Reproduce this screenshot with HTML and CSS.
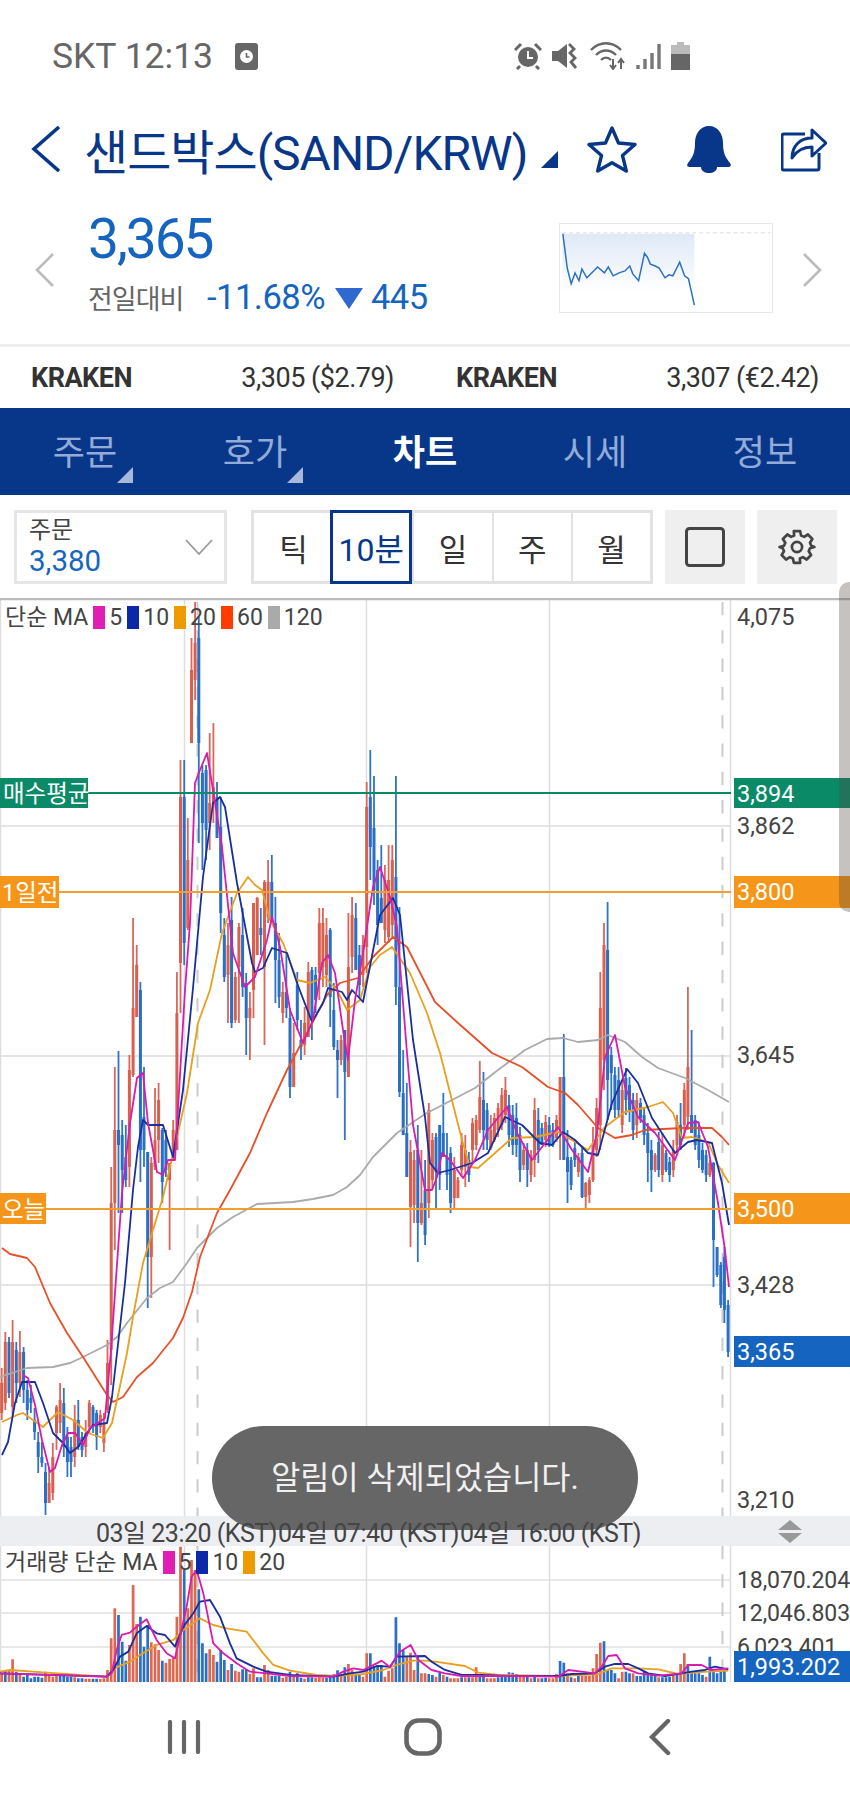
FILE: index.html
```html
<!DOCTYPE html>
<html lang="ko">

<head>
    <meta charset="UTF-8">
    <meta name="viewport" content="width=device-width, initial-scale=1.0">
    <title>샌드박스 차트</title>
    <link rel="stylesheet" href="styles.css">
</head>

<body>
    <div class="phone">

        <!-- Status bar -->
        <div class="status-bar">
            <span class="carrier">SKT 12:13</span>
            <svg class="clock-icon" width="23" height="27" viewBox="0 0 23 27">
                <rect width="23" height="27" rx="3" fill="#666" />
                <circle cx="11.5" cy="13.5" r="6.5" fill="#fff" />
                <path d="M11.5 10v4h3" fill="none" stroke="#666" stroke-width="1.6" />
            </svg>
            <div class="status-icons">
                <svg width="28" height="28" viewBox="0 0 28 28">
                    <circle cx="14" cy="15" r="10" fill="#666" />
                    <path d="M14 9v7h5" fill="none" stroke="#fff" stroke-width="2" />
                    <path d="M1 8l6-6M27 8l-6-6M6 24l-3 3M22 24l3 3" stroke="#666" stroke-width="3" />
                </svg>
                <svg width="28" height="28" viewBox="0 0 28 28">
                    <path d="M0 9h6l9-7v24l-9-7H0z" fill="#666" />
                    <path d="M17 2l5 5-4 4 5 5-4 4 5 6" fill="none" stroke="#666" stroke-width="2.800" />
                </svg>
                <svg width="36" height="28" viewBox="0 0 36 28">
                    <path d="M1 8c9-9 21-9 30 0M6 13c6-6 14-6 20 0M11 18c3-3 7-3 10 0" fill="none" stroke="#666" stroke-width="2.4" />
                    <path d="M23 17v9M20 23l3 4 3-4M31 27v-9M28 21l3-4 3 4" fill="none" stroke="#666" stroke-width="2" />
                </svg>
                <svg width="25" height="28" viewBox="0 0 25 28">
                    <path d="M2 27v-4M9 27v-10M16 27v-16M23 27V2" stroke="#777" stroke-width="3.4" />
                </svg>
                <svg class="battery" width="19" height="28" viewBox="0 0 19 28">
                    <path d="M6 0h7v3h6v9H0V3h6z" fill="#bbb" />
                    <path d="M0 12h19v16H0z" fill="#666" />
                </svg>
            </div>
        </div>

        <!-- Title -->
        <div class="title-bar">
            <svg class="back" width="30" height="46" viewBox="0 0 30 46">
                <path d="M28 1L3 23l25 22" fill="none" stroke="#08378a" stroke-width="3.6" />
            </svg>
            <h1 class="title">샌드박스(SAND/KRW)</h1>
            <svg class="title-corner" width="17" height="17" viewBox="0 0 17 17">
                <path d="M17 0v17H0z" fill="#08378a" />
            </svg>
            <div class="title-icons">
                <svg width="50" height="48" viewBox="0 0 50 48">
                    <path d="M25 3l6.500 15 16.500 1.500-12.500 11 3.800 15.500-14.300-8.300-14.300 8.300 3.800-15.500L2 19.500 18.500 18z" fill="none" stroke="#08378a" stroke-width="3.400" stroke-linejoin="round" />
                </svg>
                <svg width="46" height="48" viewBox="0 0 46 48">
                    <path d="M23 1c9 0 14 8 14 17 0 9 2 14 7 20 2 3 0 4-2 4H4c-2 0-4-1-2-4 5-6 7-11 7-20C9 9 14 1 23 1z" fill="#08378a" />
                    <path d="M15 42c0 4 4 6 8 6s8-2 8-6z" fill="#08378a" />
                </svg>
                <svg width="46" height="46" viewBox="0 0 46 46">
                    <path d="M24 8H3a2 2 0 0 0-2 2v32a2 2 0 0 0 2 2h33a2 2 0 0 0 2-2V27" fill="none" stroke="#08378a" stroke-width="3" />
                    <path d="M11 32c0-12 8-20 20-20V4l14 13-14 13v-9c-9 0-15 3-20 11z" fill="none" stroke="#08378a" stroke-width="3" stroke-linejoin="round" />
                </svg>
            </div>
        </div>

        <!-- Quote -->
        <div class="quote">
            <svg class="pager" width="19" height="34" viewBox="0 0 19 34">
                <path d="M18 1L2 17l16 16" fill="none" stroke="#bbb" stroke-width="2.600" />
            </svg>
            <div class="quote-text">
                <div class="price">3,365</div>
                <div class="change">
                    <span class="change-label">전일대비</span>
                    <span class="change-pct">-11.68%</span>
                    <svg width="28" height="21" viewBox="0 0 28 21">
                        <path d="M0 0h28L14 21z" fill="#2f68d0" />
                    </svg>
                    <span class="change-num">445</span>
                </div>
            </div>
            <svg class="spark" width="214" height="90" viewBox="558 222 214 90">
                <defs>
                    <linearGradient id="sparkFill" x1="0" y1="0" x2="0" y2="1">
                        <stop offset="0" stop-color="#dfe9f7" />
                        <stop offset="1" stop-color="#ffffff" />
                    </linearGradient>
                </defs>
                <path d="M559 232h135v60H559z" fill="url(#sparkFill)" />
                <path d="M559 231h213" stroke="#ddd" stroke-width="1" stroke-dasharray="4 3" />
                <polyline class="spark-line" points="559.500,232 564,267 568,283 572,272 576,280 579,268 584,277 590,271 595,266 602,272 606,266 611,275 617,272 623,270 628,265 631,273 637,280 643,252 646,256 649,263 654,265 658,267 664,277 668,274 672,275 679,261 684,275 688,278 694,305" />
            </svg>
            <svg class="pager" width="19" height="34" viewBox="0 0 19 34">
                <path d="M1 1l16 16L1 33" fill="none" stroke="#bbb" stroke-width="2.600" />
            </svg>
        </div>

        <!-- Overseas exchanges -->
        <div class="exchanges">
            <div class="exchange"><b>KRAKEN</b><span>3,305 ($2.79)</span></div>
            <div class="exchange"><b>KRAKEN</b><span>3,307 (€2.42)</span></div>
        </div>

        <!-- Tabs -->
        <div class="tabs">
            <div class="tab corner">주문</div>
            <div class="tab corner">호가</div>
            <div class="tab active">차트</div>
            <div class="tab">시세</div>
            <div class="tab">정보</div>
        </div>

        <!-- Toolbar -->
        <div class="toolbar">
            <div class="order-box">
                <div class="order-text">
                    <div class="order-label">주문</div>
                    <div class="order-price">3,380</div>
                </div>
                <svg width="28" height="16" viewBox="0 0 28 16">
                    <path d="M1 1l13 14L27 1" fill="none" stroke="#999" stroke-width="1.800" />
                </svg>
            </div>
            <div class="periods">
                <div class="period">틱</div>
                <div class="period selected">10분</div>
                <div class="period">일</div>
                <div class="period">주</div>
                <div class="period">월</div>
            </div>
            <div class="tool-btn">
                <svg width="40" height="40" viewBox="0 0 40 40">
                    <rect x="1.500" y="1.500" width="37" height="37" rx="3" fill="none" stroke="#444" stroke-width="3" />
                </svg>
            </div>
            <div class="tool-btn">
                <svg width="38" height="38" viewBox="0 0 24 24">
                    <path d="M10 2h4l.6 2.800 1.900.8 2.400-1.500 2.800 2.800-1.500 2.400.8 1.900L23 12v0l-2.800.8-.8 1.900 1.500 2.400-2.800 2.800-2.400-1.500-1.900.8L14 22h-4l-.6-2.800-1.900-.8-2.400 1.500-2.800-2.800 1.500-2.400-.8-1.900L1 12l2.800-.8.8-1.900-1.500-2.400 2.800-2.800 2.400 1.500 1.900-.8z" fill="none" stroke="#444" stroke-width="1.700" stroke-linejoin="round" />
                    <circle cx="12" cy="12" r="3.200" fill="none" stroke="#444" stroke-width="1.700" />
                </svg>
            </div>
        </div>

        <!-- Price chart -->
        <div class="chart">
            <svg class="plot" width="850" height="918" viewBox="0 598 850 918">
                <path class="grid" d="M0 826H731M0 1056H731M0 1285H731M.5 599V1516M184.500 599V1516M366.500 599V1516M549.500 599V1516M730.500 599V1516" />
                <path class="dash" d="M197.500 602V1516M722.500 602V1516" />
                <path d="M0 599H850" stroke="#bbb" stroke-width="2.500" />
                <g id="candles"></g>
                <polyline class="ma ma120" points="0,1377 27,1368 53,1367 70,1363 83,1357 107,1345 117,1337 127,1323 147,1298 160,1288 173,1282 187,1263 197,1248 217,1228 233,1217 257,1204 293,1202 313,1199 333,1195 347,1187 360,1175 373,1157 397,1133 425,1114 452,1100 475,1088 498,1070 525,1050 547,1039 563,1038 578,1042 598,1040 608,1035 625,1042 642,1057 658,1068 685,1078 708,1090 729,1102" />
                <polyline class="ma ma60" points="2,1248 10,1254 27,1258 35,1267 50,1303 67,1333 83,1357 107,1395 113,1402 123,1397 137,1377 153,1363 173,1338 183,1318 192,1292 200,1257 217,1213 230,1190 250,1153 267,1113 287,1070 307,1033 327,995 340,983 358,978 373,957 393,937 407,947 435,1002 458,1023 492,1053 522,1067 548,1087 565,1093 578,1105 598,1128 615,1138 632,1135 645,1130 682,1128 712,1128 722,1137 729,1145" />
                <polyline class="ma ma20" points="2,1422 17,1415 23,1413 43,1427 58,1412 73,1420 88,1433 103,1438 112,1423 117,1400 127,1353 133,1317 143,1263 163,1197 177,1137 187,1093 198,1023 210,990 222,933 237,893 248,877 255,885 262,890 270,920 283,943 297,980 310,983 325,977 337,990 347,1010 360,1000 370,967 380,955 392,947 410,973 427,1013 440,1053 462,1140 470,1167 478,1168 495,1153 512,1138 535,1137 558,1132 572,1140 588,1150 605,1127 625,1112 648,1107 663,1102 673,1113 682,1138 692,1137 708,1142 718,1165 729,1183" />
                <polyline class="ma ma10" points="2,1455 8,1442 15,1403 22,1382 35,1382 43,1403 53,1433 63,1443 70,1453 78,1447 87,1433 93,1425 107,1423 112,1397 125,1283 133,1190 138,1147 143,1120 148,1125 163,1125 173,1157 183,1090 193,988 203,877 213,803 220,797 225,807 237,883 252,963 255,972 263,968 272,948 287,953 297,983 312,1022 323,1003 328,988 342,992 347,1000 352,990 363,1002 380,915 393,898 400,915 413,1040 425,1117 430,1163 438,1173 450,1170 472,1163 488,1153 505,1117 522,1125 540,1143 552,1145 563,1132 575,1140 588,1153 598,1155 612,1103 627,1069 638,1083 652,1118 675,1153 688,1142 697,1140 712,1143 722,1183 729,1225" />
                <polyline class="ma ma5" points="23,1375 28,1378 35,1405 42,1440 50,1472 55,1468 62,1445 68,1433 75,1433 83,1445 90,1428 98,1423 105,1418 111,1350 122,1193 130,1123 137,1078 143,1073 148,1123 157,1172 163,1175 168,1160 175,1160 185,990 190,923 195,783 200,770 207,753 213,790 222,847 233,953 245,987 255,977 267,940 272,917 280,947 290,1010 303,1043 313,1020 322,963 328,955 335,973 343,1030 348,1060 355,1000 363,953 373,887 380,867 390,897 397,927 407,1053 413,1125 425,1190 432,1190 437,1177 442,1153 450,1160 463,1178 475,1160 488,1130 507,1107 517,1133 532,1160 542,1147 558,1127 572,1150 588,1172 597,1133 605,1057 615,1035 625,1087 638,1117 655,1133 675,1160 688,1123 698,1122 708,1147 718,1203 725,1250 729,1287" />

                <path d="M0 793H731" stroke="#0b8a68" stroke-width="2" />
                <path d="M0 892H731M0 1209H731" stroke="#ee9f2e" stroke-width="2" />

                <rect x="0" y="778" width="88" height="30" fill="#0b8a68" />
                <rect x="0" y="876" width="59" height="32" fill="#f5961a" />
                <rect x="0" y="1193" width="46" height="31" fill="#f5961a" />
                <text class="tag-text" x="3" y="802">매수평균</text>
                <text class="tag-text" x="2" y="901">1일전</text>
                <text class="tag-text" x="2" y="1218">오늘</text>

                <rect x="734" y="778" width="116" height="30" fill="#0b8a68" />
                <rect x="734" y="876" width="116" height="32" fill="#f5961a" />
                <rect x="734" y="1193" width="116" height="31" fill="#f5961a" />
                <rect x="734" y="1336" width="116" height="31" fill="#1565c0" />
                <text class="tag-text" x="737" y="802">3,894</text>
                <text class="tag-text" x="737" y="900">3,800</text>
                <text class="tag-text" x="737" y="1217">3,500</text>
                <text class="tag-text" x="737" y="1360">3,365</text>

                <text class="axis-text" x="737" y="625">4,075</text>
                <text class="axis-text" x="737" y="834">3,862</text>
                <text class="axis-text" x="737" y="1063">3,645</text>
                <text class="axis-text" x="737" y="1293">3,428</text>
                <text class="axis-text" x="737" y="1508">3,210</text>
            </svg>
            <div class="legend">
                <span>단순 MA</span>
                <i class="swatch s5"></i><span>5</span>
                <i class="swatch s10"></i><span>10</span>
                <i class="swatch s20"></i><span>20</span>
                <i class="swatch s60"></i><span>60</span>
                <i class="swatch s120"></i><span>120</span>
            </div>
        </div>

        <!-- Time axis -->
        <div class="time-band">
            <span class="time-label">03일 23:20 (KST)</span>
            <span class="time-label">04일 07:40 (KST)</span>
            <span class="time-label">04일 16:00 (KST)</span>
            <svg class="band-arrows" width="24" height="23" viewBox="0 0 24 23">
                <path d="M12 0l12 10H0zM0 13h24L12 23z" fill="#999" />
            </svg>
        </div>

        <!-- Volume -->
        <div class="volume">
            <svg class="plot" width="850" height="136" viewBox="0 1546 850 136">
                <path class="grid vol-grid" d="M0 1580H731M0 1613H731M0 1647H731" />
                <path class="grid" d="M.5 1546V1682M184.500 1546V1682M366.500 1546V1682M549.500 1546V1682M730.500 1546V1682" />
                <path class="dash" d="M197.500 1546V1682M722.500 1546V1682" />
                <g id="volBars"></g>
                <g transform="translate(0 1530) scale(.3333)">
                    <polyline class="ma vol-ma ma20" points="0,425 30,420 130,427 240,435 320,440 350,412 390,395 420,375 470,345 520,330 550,300 600,265 640,285 680,295 740,305 790,370 820,405 870,422 950,435 1010,438 1090,432 1150,420 1190,405 1240,392 1275,392 1305,395 1395,408 1435,428 1495,435 1675,438 1795,432 1835,415 1915,415 1975,418 2035,432 2075,428 2125,425 2185,422" />
                    <polyline class="ma vol-ma ma10" points="0,430 320,440 340,420 360,380 385,365 410,310 440,288 470,310 495,315 525,350 550,290 580,250 600,215 630,210 660,260 690,340 710,385 760,410 800,425 870,435 1000,440 1050,430 1090,425 1130,408 1170,410 1190,380 1275,378 1295,395 1335,420 1385,435 1445,435 1525,438 1675,438 1715,432 1785,430 1815,410 1845,402 1885,402 1915,415 1945,430 1995,438 2045,430 2075,425 2115,420 2145,410 2185,418" />
                    <polyline class="ma vol-ma ma5" points="0,430 320,440 335,430 350,360 365,315 390,308 410,290 440,268 470,330 500,370 525,385 540,320 560,230 575,140 590,120 610,190 640,340 670,370 710,400 750,425 800,430 870,438 1000,440 1030,425 1060,415 1090,420 1130,400 1145,392 1170,412 1200,365 1232,345 1255,390 1275,405 1295,420 1335,430 1385,438 1525,438 1675,440 1705,420 1745,425 1785,430 1805,410 1825,378 1850,375 1875,415 1915,430 1975,437 2045,430 2065,405 2105,405 2135,420 2185,415" />
                </g>
                <text class="axis-text vol-axis" x="737" y="1588">18,070.204</text>
                <text class="axis-text vol-axis" x="737" y="1621">12,046.803</text>
                <text class="axis-text vol-axis" x="737" y="1655">6,023.401</text>
                <rect x="734" y="1651" width="116" height="31" fill="#1565c0" />
                <text class="tag-text" x="737" y="1675">1,993.202</text>
            </svg>
            <div class="legend vol-legend">
                <span>거래량 단순 MA</span>
                <i class="swatch s5"></i><span>5</span>
                <i class="swatch s10"></i><span>10</span>
                <i class="swatch s20"></i><span>20</span>
            </div>
        </div>

        <!-- Android nav -->
        <div class="nav-bar">
            <svg width="34" height="34" viewBox="0 0 34 34">
                <path d="M3 2v30M17 2v30M31 2v30" stroke="#666" stroke-width="4.200" stroke-linecap="round" />
            </svg>
            <svg class="nav-home" width="38" height="38" viewBox="0 0 38 38">
                <rect x="2.500" y="2.500" width="33" height="33" rx="12" fill="none" stroke="#666" stroke-width="4.600" />
            </svg>
            <svg width="22" height="36" viewBox="0 0 22 36">
                <path d="M19 2L3 18l16 16" fill="none" stroke="#666" stroke-width="4.400" stroke-linecap="round" />
            </svg>
        </div>

        <div class="toast">알림이 삭제되었습니다.</div>
        <div class="scroll-handle"></div>
    </div>

    <script src="chart.js"></script>
</body>

</html>
```

FILE: styles.css
```css
* {
    box-sizing: border-box;
}

body {
    margin: 0;
    background-color: white;
    font-family: Roboto, "Noto Sans CJK KR", sans-serif;
}

.phone {
    position: relative;
    width: 850px;
    height: 1795px;
    overflow: hidden;
}

/* status bar */
.status-bar {
    height: 112px;
    display: flex;
    align-items: center;
    padding: 0 160px 0 52px;
}

.carrier {
    font-size: 35.500px;
    color: #666;
}

.clock-icon {
    margin-left: 22px;
}

.status-icons {
    margin-left: auto;
    display: flex;
    align-items: center;
    gap: 10px;
}

/* title */
.title-bar {
    height: 74px;
    display: flex;
    align-items: center;
    padding-left: 31px;
}

.title {
    margin: 0 0 0 23px;
    font-size: 48px;
    font-weight: 400;
    letter-spacing: -1px;
    color: #08378a;
    white-space: nowrap;
}

.title-corner {
    margin: 20px 0 0 14px;
}

.title-icons {
    display: flex;
    align-items: center;
    gap: 49px;
    margin-left: 29px;
}

/* quote */
.quote {
    height: 161px;
    border-bottom: 3px solid #eee;
    display: flex;
    align-items: center;
    padding-left: 35px;
}

.quote .pager {
    flex: none;
    margin-top: 10px;
}

.quote-text {
    flex: none;
    width: 471px;
    margin: -8px 0 0 34px;
}

.price {
    font-size: 55px;
    line-height: 64px;
    letter-spacing: -2px;
    color: #1565c0;
}

.change {
    display: flex;
    align-items: center;
    margin-top: 8px;
    height: 36px;
}

.change-label {
    width: 119px;
    font-size: 27px;
    letter-spacing: -1px;
    color: #666;
}

.change-pct,
.change-num {
    font-size: 34.500px;
    letter-spacing: -.5px;
    color: #1565c0;
}

.change svg {
    margin: 2px 8px 0 10px;
}

.spark {
    flex: none;
    border: 1.500px solid #e6e6e6;
    margin: 6px 30px 0 0;
}

.spark-line {
    fill: none;
    stroke: #2a6fc4;
    stroke-width: 1.500;
}

/* exchanges */
.exchanges {
    height: 61px;
    display: flex;
    align-items: center;
    gap: 62px;
    padding: 0 31px;
    font-size: 27px;
    color: #333;
}

.exchange {
    flex: 1;
    display: flex;
    justify-content: space-between;
    letter-spacing: -.5px;
}

/* tabs */
.tabs {
    height: 87px;
    display: grid;
    grid-template-columns: repeat(5, 1fr);
    background-color: #08378a;
}

.tab {
    position: relative;
    display: flex;
    align-items: center;
    justify-content: center;
    padding-bottom: 4px;
    font-size: 35px;
    color: #93abd8;
}

.tab.active {
    color: white;
    font-weight: 700;
}

.tab.corner::after {
    content: "";
    position: absolute;
    right: 37px;
    bottom: 12px;
    border-left: 16px solid transparent;
    border-bottom: 16px solid #a8b8da;
}

/* toolbar */
.toolbar {
    height: 103px;
    display: flex;
    gap: 12px;
    padding: 15px 13px 14px 14px;
}

.order-box {
    width: 213px;
    margin-right: 12px;
    border: 3px solid #e6e6e6;
    display: flex;
    align-items: center;
    justify-content: space-between;
    padding: 0 11px 0 12px;
}

.order-label {
    font-size: 24px;
    line-height: 28px;
    color: #444;
}

.order-price {
    font-size: 29.500px;
    line-height: 34px;
    color: #1565c0;
}

.periods {
    width: 402px;
    display: grid;
    grid-template-columns: repeat(5, 1fr);
    border: 3px solid #e2e2e2;
}

.period {
    display: flex;
    align-items: center;
    justify-content: center;
    font-size: 31px;
    color: #333;
    border-left: 2px solid #e2e2e2;
}

.period:first-child {
    border-left: none;
}

.period.selected {
    margin: -3px 0 -3px -3px;
    border: 3px solid #08378a;
    font-size: 32px;
    color: #08378a;
    white-space: nowrap;
}

.tool-btn {
    width: 80px;
    display: flex;
    align-items: center;
    justify-content: center;
    background-color: #efefef;
}

/* chart panels */
.chart {
    position: relative;
    height: 918px;
}

.plot {
    display: block;
}

.grid {
    fill: none;
    stroke: #ddd;
    stroke-width: 1.500;
}

.vol-grid {
    stroke: #e8e8e8;
    stroke-width: 2;
}

.dash {
    fill: none;
    stroke: #ccc;
    stroke-width: 2;
    stroke-dasharray: 13.300 15;
}

.ma {
    fill: none;
    stroke-width: 1.800;
    stroke-linejoin: round;
}

.vol-ma {
    stroke-width: 5.500;
}

.ma5 {
    stroke: #d81cb0;
}

.ma10 {
    stroke: #1a2f9e;
}

.ma20 {
    stroke: #e8a020;
}

.ma60 {
    stroke: #e85028;
}

.ma120 {
    stroke: #aaa;
}

.axis-text {
    font-size: 23.500px;
    fill: #444;
}

.vol-axis {
    font-size: 23px;
    letter-spacing: -.1px;
}

.tag-text {
    font-size: 23.500px;
    fill: white;
}

.legend {
    position: absolute;
    top: 8px;
    left: 5px;
    display: flex;
    align-items: center;
    gap: 4px;
    font-size: 23px;
    line-height: 23px;
    color: #444;
}

.swatch {
    width: 12px;
    height: 23px;
    margin-left: 1px;
}

.s5 {
    background-color: #e01eb4;
}

.s10 {
    background-color: #0b28a8;
}

.s20 {
    background-color: #ed9b00;
}

.s60 {
    background-color: #ff3d00;
}

.s120 {
    background-color: #aaa;
}

/* time axis */
.time-band {
    height: 30px;
    display: flex;
    align-items: center;
    padding: 0 48px 0 96px;
    background-color: #eceef2;
}

.time-label {
    position: relative;
    z-index: 3;
    width: 182px;
    font-size: 25px;
    letter-spacing: -.5px;
    color: #444;
    white-space: nowrap;
}

.band-arrows {
    margin-left: auto;
}

.volume {
    position: relative;
    height: 136px;
}

.vol-legend {
    top: 5px;
}

/* nav */
.nav-bar {
    height: 113px;
    display: flex;
    align-items: center;
    padding: 0 0 4px 167px;
}

.nav-home {
    margin: 0 207px 0 203px;
}

/* overlays */
.toast {
    position: absolute;
    z-index: 2;
    top: 1426px;
    left: 212px;
    width: 426px;
    height: 104px;
    border-radius: 52px;
    display: flex;
    align-items: center;
    justify-content: center;
    padding-bottom: 6px;
    background-color: #666;
    color: #f0f0f0;
    font-size: 31.700px;
}

.scroll-handle {
    position: absolute;
    z-index: 4;
    top: 582px;
    left: 839px;
    width: 11px;
    height: 330px;
    border-radius: 10px 0 0 10px;
    background-color: rgba(80, 70, 60, 0.33);
}
```

FILE: chart.js
```js
const RED = 1;
const BLUE = 0;
const NS = 'http://www.w3.org/2000/svg';

// one row per 10 min candle: colour, high, body top, body bottom, low (page y)
const candles = [
    [RED, 1368, 1383, 1413, 1420], [RED, 1332, 1342, 1403, 1410], [BLUE, 1337, 1342, 1393, 1398], [RED, 1320, 1342, 1407, 1417],
    [BLUE, 1342, 1350, 1383, 1403], [RED, 1331, 1352, 1383, 1397], [BLUE, 1347, 1352, 1390, 1403], [BLUE, 1380, 1390, 1410, 1420],
    [BLUE, 1385, 1398, 1403, 1413], [BLUE, 1408, 1420, 1432, 1440], [BLUE, 1432, 1442, 1457, 1473], [BLUE, 1442, 1457, 1463, 1467],
    [BLUE, 1463, 1472, 1503, 1515], [RED, 1467, 1483, 1503, 1503], [RED, 1443, 1457, 1493, 1500], [RED, 1405, 1407, 1433, 1450],
    [RED, 1383, 1400, 1423, 1433], [BLUE, 1388, 1403, 1447, 1457], [BLUE, 1427, 1437, 1462, 1477], [BLUE, 1437, 1447, 1462, 1477],
    [RED, 1405, 1420, 1457, 1467], [BLUE, 1400, 1420, 1447, 1450], [BLUE, 1432, 1437, 1450, 1457], [RED, 1420, 1433, 1447, 1457],
    [RED, 1400, 1403, 1427, 1433], [BLUE, 1405, 1407, 1427, 1433], [BLUE, 1410, 1413, 1437, 1450], [RED, 1410, 1415, 1427, 1433],
    [RED, 1413, 1423, 1443, 1452], [RED, 1340, 1363, 1410, 1413], [RED, 1167, 1203, 1350, 1385], [RED, 1067, 1130, 1203, 1250],
    [BLUE, 1051, 1130, 1145, 1213], [BLUE, 1120, 1135, 1170, 1213], [BLUE, 1125, 1157, 1180, 1187], [RED, 1055, 1070, 1167, 1187],
    [RED, 918, 1008, 1075, 1077], [RED, 945, 965, 1017, 1017], [BLUE, 982, 990, 1150, 1182], [BLUE, 1067, 1117, 1150, 1167],
    [BLUE, 1152, 1152, 1257, 1308], [RED, 1157, 1163, 1257, 1298], [RED, 1088, 1140, 1167, 1170], [RED, 1083, 1100, 1140, 1163],
    [BLUE, 1128, 1130, 1182, 1203], [BLUE, 1130, 1140, 1170, 1177], [RED, 1163, 1163, 1180, 1250], [RED, 1120, 1130, 1160, 1160],
    [RED, 972, 1013, 1150, 1150], [RED, 760, 797, 963, 1013], [BLUE, 760, 797, 943, 965], [RED, 818, 860, 928, 930],
    [RED, 638, 670, 743, 743], [RED, 602, 643, 680, 700], [BLUE, 617, 638, 743, 843], [BLUE, 765, 773, 823, 870],
    [BLUE, 765, 770, 830, 860], [RED, 733, 803, 823, 850], [RED, 723, 787, 803, 823], [BLUE, 782, 797, 838, 838],
    [BLUE, 797, 827, 913, 933], [BLUE, 918, 935, 977, 982], [RED, 923, 945, 975, 1023], [BLUE, 897, 920, 1023, 1028],
    [RED, 972, 977, 1020, 1023], [RED, 923, 927, 967, 1023], [BLUE, 908, 935, 987, 997], [BLUE, 973, 983, 1018, 1055],
    [RED, 992, 1008, 1018, 1060], [RED, 903, 903, 990, 1018], [RED, 897, 898, 955, 955], [BLUE, 908, 928, 935, 955],
    [RED, 880, 882, 967, 1045], [RED, 860, 882, 917, 923], [BLUE, 855, 882, 922, 923], [BLUE, 897, 923, 960, 1003],
    [BLUE, 933, 960, 997, 1008], [RED, 982, 992, 1013, 1023], [BLUE, 952, 992, 1008, 1018], [BLUE, 1008, 1018, 1087, 1098],
    [RED, 1023, 1053, 1087, 1087], [BLUE, 972, 985, 1020, 1030], [BLUE, 1020, 1040, 1047, 1060], [RED, 1007, 1023, 1045, 1055],
    [RED, 962, 972, 1037, 1037], [BLUE, 967, 970, 1020, 1040], [BLUE, 967, 975, 1000, 1013], [RED, 908, 923, 973, 1000],
    [RED, 908, 923, 967, 987], [RED, 918, 935, 975, 987], [BLUE, 928, 930, 997, 1027], [BLUE, 983, 1010, 1047, 1050],
    [BLUE, 1040, 1050, 1060, 1098], [RED, 1035, 1040, 1060, 1065], [BLUE, 1030, 1030, 1072, 1140], [RED, 913, 967, 1077, 1077],
    [RED, 897, 915, 957, 973], [BLUE, 903, 918, 970, 970], [BLUE, 945, 955, 985, 997], [RED, 935, 945, 975, 987],
    [RED, 782, 807, 947, 973], [BLUE, 750, 797, 847, 880], [BLUE, 776, 828, 890, 905], [BLUE, 860, 870, 925, 945],
    [BLUE, 845, 898, 923, 923], [RED, 865, 880, 930, 943], [RED, 845, 880, 937, 943], [RED, 845, 860, 925, 937],
    [BLUE, 776, 877, 987, 1005], [BLUE, 907, 987, 1092, 1097], [BLUE, 1050, 1093, 1135, 1135], [BLUE, 1083, 1133, 1177, 1177],
    [RED, 1140, 1152, 1207, 1247], [RED, 1150, 1160, 1205, 1223], [BLUE, 1125, 1150, 1223, 1262], [RED, 1150, 1203, 1223, 1225],
    [BLUE, 1160, 1190, 1235, 1245], [RED, 1103, 1110, 1203, 1218], [RED, 1133, 1140, 1180, 1190], [BLUE, 1133, 1137, 1172, 1208],
    [BLUE, 1125, 1125, 1175, 1190], [BLUE, 1093, 1133, 1157, 1157], [BLUE, 1133, 1157, 1175, 1190], [BLUE, 1147, 1153, 1203, 1213],
    [RED, 1157, 1170, 1198, 1208], [RED, 1177, 1180, 1198, 1198], [RED, 1133, 1145, 1170, 1177], [RED, 1135, 1150, 1167, 1187],
    [BLUE, 1152, 1160, 1175, 1182], [RED, 1118, 1123, 1150, 1163], [RED, 1115, 1120, 1145, 1150], [RED, 1061, 1097, 1130, 1133],
    [BLUE, 1072, 1100, 1130, 1150], [BLUE, 1103, 1110, 1140, 1150], [RED, 1115, 1130, 1148, 1150], [RED, 1113, 1118, 1140, 1142],
    [RED, 1103, 1108, 1130, 1137], [RED, 1088, 1095, 1125, 1130], [RED, 1077, 1090, 1115, 1123], [BLUE, 1095, 1105, 1135, 1147],
    [BLUE, 1105, 1115, 1145, 1155], [BLUE, 1103, 1118, 1145, 1157], [BLUE, 1127, 1135, 1170, 1182], [RED, 1143, 1150, 1165, 1170],
    [BLUE, 1143, 1150, 1170, 1187], [RED, 1150, 1155, 1175, 1182], [RED, 1098, 1110, 1160, 1177], [BLUE, 1108, 1120, 1150, 1163],
    [BLUE, 1123, 1128, 1145, 1145], [RED, 1115, 1122, 1140, 1147], [BLUE, 1117, 1125, 1145, 1147], [BLUE, 1123, 1130, 1145, 1147],
    [RED, 1115, 1120, 1138, 1142], [RED, 1077, 1077, 1130, 1160], [BLUE, 1034, 1077, 1160, 1160], [BLUE, 1130, 1157, 1172, 1203],
    [BLUE, 1157, 1160, 1185, 1190], [BLUE, 1140, 1148, 1160, 1167], [RED, 1153, 1157, 1172, 1177], [BLUE, 1148, 1153, 1197, 1198],
    [RED, 1182, 1183, 1197, 1208], [RED, 1177, 1180, 1195, 1203], [RED, 1127, 1143, 1180, 1182], [RED, 1098, 1108, 1150, 1157],
    [RED, 972, 1008, 1125, 1150], [RED, 923, 945, 1060, 1090], [BLUE, 902, 950, 1080, 1120], [BLUE, 1047, 1055, 1073, 1110],
    [BLUE, 1067, 1075, 1110, 1118], [BLUE, 1067, 1080, 1110, 1118], [RED, 1080, 1090, 1125, 1133], [BLUE, 1068, 1078, 1100, 1115],
    [BLUE, 1077, 1085, 1110, 1122], [BLUE, 1093, 1100, 1130, 1140], [RED, 1093, 1100, 1125, 1138], [BLUE, 1098, 1103, 1118, 1123],
    [BLUE, 1107, 1115, 1135, 1145], [BLUE, 1123, 1133, 1153, 1182], [BLUE, 1140, 1150, 1170, 1192], [RED, 1153, 1155, 1170, 1172],
    [BLUE, 1132, 1142, 1170, 1177], [RED, 1133, 1145, 1175, 1182], [BLUE, 1150, 1153, 1170, 1172], [BLUE, 1157, 1162, 1175, 1182],
    [RED, 1140, 1150, 1170, 1177], [RED, 1115, 1122, 1145, 1153], [BLUE, 1103, 1125, 1145, 1150], [RED, 1083, 1090, 1125, 1138],
    [RED, 987, 1067, 1117, 1130], [BLUE, 1030, 1115, 1133, 1133], [BLUE, 1115, 1120, 1145, 1150], [BLUE, 1122, 1135, 1160, 1168],
    [BLUE, 1143, 1150, 1170, 1173], [BLUE, 1150, 1155, 1175, 1182], [RED, 1160, 1163, 1175, 1177], [BLUE, 1162, 1163, 1240, 1287],
    [BLUE, 1247, 1247, 1275, 1277], [BLUE, 1262, 1265, 1305, 1308], [BLUE, 1247, 1257, 1310, 1323], [BLUE, 1300, 1305, 1352, 1357]
];

// volume bar tops, read at 3x (y = 1530 + top / 3): positive is red, negative is blue
const volumes = [
    430, -420, 420, 388, -425, 430, -440, -435, -445, -440, -440, -443, 425, 438, 440, 432, -438, -438, -440, -440,
    442, -445, -445, 446, 446, -446, -446, 447, 445, 420, 325, 235, -255, -335, -392, 345, 165, 282, -260, -350,
    -285, 337, 343, 360, -392, 398, 387, 383, 260, 50, -120, 235, 90, 120, -178, -340, -370, 358, 375, -395,
    -360, -390, 420, -402, 422, 425, -418, -418, 432, 415, -442, -442, 405, 420, -437, -437, -437, 443, 440, -425,
    435, -430, -443, 446, -442, -442, 443, 442, 443, -444, -442, -433, -421, 437, -412, 402, 420, -435, -435, 440,
    370, -370, -408, -408, -405, 440, 422, 415, -262, -340, -360, 380, 368, 420, -380, 430, 430, -432, -435, 440,
    -428, 435, -440, 445, 445, 445, -442, 442, -442, 442, 412, -438, -437, 445, 445, 445, -442, -440, -440, -427,
    -428, -432, 435, 440, -440, 445, -440, 445, -445, -443, 445, 445, 432, -393, -398, 430, -442, 445, -435, 437,
    437, 437, 415, 372, 338, -334, -420, -420, -430, 445, 425, -425, -430, 430, -438, -438, -425, -430, -435, -438,
    442, -442, -442, -440, 436, -430, 402, 370, -402, -430, -430, -430, -435, 440, -380, -425, -430, -425, -420
];

function addPath(parent, d, color, width) {
    const path = document.createElementNS(NS, 'path');
    path.setAttribute('d', d);
    path.setAttribute('fill', 'none');
    path.setAttribute('stroke', color);
    path.setAttribute('stroke-width', width);
    parent.appendChild(path);
}

function candleX(i) {
    return (1.7 + i * 3.65).toFixed(1);
}

function drawCandles() {
    const group = document.getElementById('candles');
    const wicks = { [RED]: '', [BLUE]: '' };
    const bodies = { [RED]: '', [BLUE]: '' };

    candles.forEach(([color, high, top, bottom, low], i) => {
        const x = candleX(i);
        wicks[color] += `M${x} ${high}V${low}`;
        bodies[color] += `M${x} ${top}V${bottom}`;
    });

    addPath(group, wicks[RED], '#d9675a', 1.8);
    addPath(group, bodies[RED], '#d9604f', 3);
    addPath(group, wicks[BLUE], '#2f74c6', 1.8);
    addPath(group, bodies[BLUE], '#2a6fc4', 3);
}

function drawVolumes() {
    const group = document.getElementById('volBars');
    let red = '';
    let blue = '';

    volumes.forEach((value, i) => {
        const y = (1530 + Math.abs(value) / 3).toFixed(1);
        const bar = `M${candleX(i)} 1682V${y}`;
        if (value > 0) {
            red += bar;
        } else {
            blue += bar;
        }
    });

    addPath(group, red, '#e0674f', 2.7);
    addPath(group, blue, '#2a6fc4', 2.7);
}

drawCandles();
drawVolumes();
```
